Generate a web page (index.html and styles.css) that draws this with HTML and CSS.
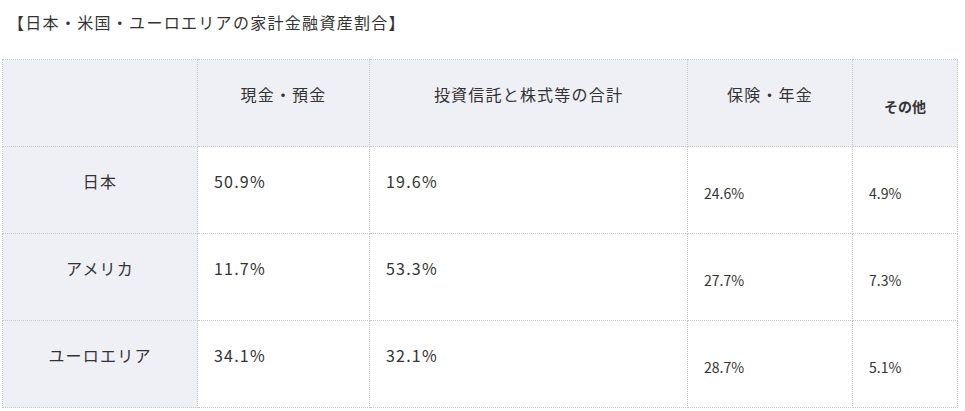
FILE: index.html
```html
<!DOCTYPE html>
<html lang="ja">
<head>
<meta charset="utf-8">
<link rel="stylesheet" href="styles.css">
</head>
<body>
<div class="page">
  <p class="title">【日本・米国・ユーロエリアの家計金融資産割合】</p>
  <table class="data">
    <colgroup>
      <col class="c1"><col class="c2"><col class="c3"><col class="c4"><col class="c5">
    </colgroup>
    <thead>
      <tr>
        <th class="head"></th>
        <th class="head">現金・預金</th>
        <th class="head">投資信託と株式等の合計</th>
        <th class="head">保険・年金</th>
        <th class="head small bold">その他</th>
      </tr>
    </thead>
    <tbody>
      <tr>
        <th class="rowhead">日本</th>
        <td>50.9%</td>
        <td>19.6%</td>
        <td class="small">24.6%</td>
        <td class="small">4.9%</td>
      </tr>
      <tr>
        <th class="rowhead">アメリカ</th>
        <td>11.7%</td>
        <td>53.3%</td>
        <td class="small">27.7%</td>
        <td class="small">7.3%</td>
      </tr>
      <tr>
        <th class="rowhead">ユーロエリア</th>
        <td>34.1%</td>
        <td>32.1%</td>
        <td class="small">28.7%</td>
        <td class="small">5.1%</td>
      </tr>
    </tbody>
  </table>
</div>
</body>
</html>
```
FILE: styles.css
```css
html, body {
  margin: 0;
  padding: 0;
  background: #ffffff;
}
.page {
  padding: 8px 8px 0 2px;
  font-family: "Noto Sans CJK JP", "Noto Sans", sans-serif;
  color: #333333;
}
.title {
  margin: 0 0 0 6px;
  font-size: 16px;
  line-height: 28px;
  letter-spacing: 1.3px;
}
.data {
  margin-top: 23px;
  border-collapse: collapse;
  table-layout: fixed;
  width: 955px;
}
.c1 { width: 195px; }
.c2 { width: 172px; }
.c3 { width: 318px; }
.c4 { width: 165px; }
.c5 { width: 105px; }
.data th, .data td {
  border: 1px dotted #c8c8c8;
  height: 87px;
  box-sizing: border-box;
  padding: 20px 16px 0;
  vertical-align: top;
  font-size: 16px;
  line-height: 28px;
  letter-spacing: 1.2px;
  font-weight: 400;
  text-align: left;
}
.data th.head {
  background: #eff0f5;
  text-align: center;
}
.data th.rowhead {
  background: #eff0f5;
  text-align: center;
}
.data .small {
  font-size: 14px;
  letter-spacing: 0;
  vertical-align: middle;
  padding-top: 6px;
}
.data th.bold {
  font-weight: 700;
}
```
